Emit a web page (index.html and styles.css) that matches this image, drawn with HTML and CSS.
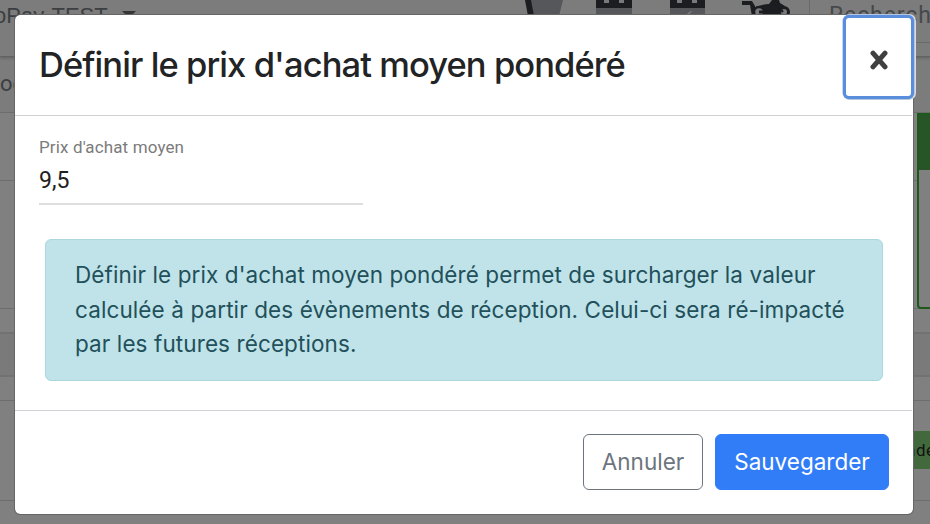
FILE: index.html
```html
<!DOCTYPE html>
<html lang="fr">
<head>
<meta charset="utf-8">
<title>Prix d'achat moyen pondéré</title>
<link rel="stylesheet" href="styles.css">
</head>
<body>
<div class="page">
  <header class="topbar">
    <div class="account"><span>oPay-TEST</span><i class="caret"></i></div>
    <svg class="topicons" width="280" height="16" viewBox="0 0 280 16">
      <path fill="#55575a" d="M0 0H38L34 16H7Z"/><path fill="#1b1d21" d="M0 0H6L9 16H3Z"/>
      <path fill="#55575a" d="M71 7h36v9H71zM145 7h35v9h-35z"/>
      <path fill="#1b1d21" d="M71 0h36v8H71zM145 0h35v8h-35z"/>
      <path fill="#77797b" d="M79 0h5v3h-5zM94 0h5v3h-5zM152 0h5v3h-5zM167 0h5v3h-5zM161 16q2-5 7-5q-4 2-3 5zM92 14h2v2h-2z"/>
      <path fill="#1b1d21" d="M217 1h10l3 5 2 10h-5l-2-11h-8zM231 7q8-3 13-3l3-4h7l1 3 5 3-4 2-3 7h-13q0-6-6-7z"/>
      <circle cx="234" cy="12" r="5" fill="#77797b" stroke="#1b1d21" stroke-width="2.5"/>
      <path d="M234 12h9" stroke="#1b1d21" stroke-width="3"/>
      <circle cx="259" cy="12" r="4.5" fill="#77797b" stroke="#1b1d21" stroke-width="3"/>
      <path d="M249 1l9 11" stroke="#1b1d21" stroke-width="2"/>
    </svg>
    <div class="search">Recherche</div>
  </header>
  <div class="content">
    <div class="rows">
      <div class="row crumbs">oduits</div>
      <div class="row r2"></div>
      <div class="row r3"></div>
      <div class="row r4"></div>
      <div class="row r5"></div>
      <div class="row r6"></div>
      <div class="row r7"></div>
      <div class="row r8"></div>
    </div>
    <aside class="side">
      <div class="card"><div class="card-head"></div></div>
      <div class="tag">Pondéré</div>
    </aside>
  </div>
</div>
<section class="modal" role="dialog">
  <header class="modal-head">
    <h1>Définir le prix d'achat moyen pondéré</h1>
    <button class="close" aria-label="Fermer"><svg width="20" height="20" viewBox="0 0 20 20"><path d="M4 3.2L16 16.8M16 3.2L4 16.8" stroke="#404040" stroke-width="5" stroke-linecap="round"/></svg></button>
  </header>
  <div class="modal-body">
    <div class="field"><label>Prix d'achat moyen</label><div class="value">9,5</div></div>
    <div class="alert">Définir le prix d'achat moyen pondéré permet de surcharger la valeur<br>calculée à partir des évènements de réception. Celui-ci sera ré-impacté<br>par les futures réceptions.</div>
  </div>
  <footer class="modal-foot">
    <button class="btn cancel">Annuler</button>
    <button class="btn save">Sauvegarder</button>
  </footer>
</section>
</body>
</html>
```
FILE: styles.css
```css
* { box-sizing: border-box; }
body { margin: 0; width: 930px; height: 524px; overflow: hidden; position: relative; background: #808080; font-family: Inter, sans-serif; }
.page { height: 524px; display: flex; flex-direction: column; color: #3c3f42; overflow: hidden; }
.topbar { height: 57px; flex: none; display: flex; align-items: flex-start; background: #7c7c7c; border-bottom: 1px solid #626262; box-shadow: 0 1px 3px #606060; position: relative; }
.account { width: 526px; flex: none; height: 32px; display: flex; font: 22px/32px "Liberation Sans", sans-serif; margin-left: -6px; }
.caret { width: 0; height: 0; border: 7px solid transparent; border-top-color: #353535; margin: 11px 0 0 14px; }
.topicons { margin-left: 5px; flex: none; }
.search { margin-left: 4px; width: 130px; height: 43px; flex: none; border-left: 1px solid #6a6a6a; border-bottom: 1px solid #6a6a6a; padding-left: 19px; font: 23px/32px Roboto, sans-serif; letter-spacing: .9px; color: #46494c; }
.content { flex: 1; display: flex; }
.rows { width: 930px; flex: none; }
.row { border-bottom: 1px solid #6d6d6d; }
.crumbs { height: 56px; font: 400 22px/54px Roboto, sans-serif; background: #7c7c7c; white-space: nowrap; }
.r2 { height: 68px; }
.r3 { height: 128px; }
.r4 { height: 25px; border-bottom: 2px solid #727272; }
.r5 { height: 43px; background: #7a7a7a; border-bottom: 2px solid #727272; }
.r6 { height: 24px; }
.r7 { height: 100px; }
.r8 { height: 23px; border: 0; }
.side { width: 180px; flex: none; margin-left: -13px; padding-top: 56px; }
.card { height: 196px; background: #808080; border: 2px solid #1c5a1c; border-radius: 0 0 0 4px; }
.card-head { height: 55px; background: #285528; }
.tag { height: 38px; margin: 122px 0 0 -15px; background: #42693c; color: #111; font: 400 17px/39px Roboto, sans-serif; letter-spacing: .4px; text-indent: -17px; }
.modal { position: absolute; left: 14px; top: 14px; width: 900px; height: 501px; background: #fff; background-clip: padding-box; border: 1px solid #666; border-radius: 6px; display: flex; flex-direction: column; }
.modal-head { height: 101px; flex: none; border-bottom: 1px solid #cfd0d2; display: flex; justify-content: space-between; padding-left: 24px; margin-right: 1px; }
h1 { margin: 0; font-size: 34.5px; line-height: 100px; font-weight: 500; color: #212325; white-space: nowrap; letter-spacing: -.92px; }
.close { width: 71px; height: 84px; margin: 0 -2px 0 0; padding: 6px 0 0; border: 3px solid #5a8ddc; border-radius: 6px; background: #fff; box-shadow: 0 0 0 .5px #8aafe8, 1px 0 0 1px #dcdcdc; display: flex; align-items: center; justify-content: center; }
.modal-body { height: 295px; flex: none; border-bottom: 1px solid #cfd0d6; margin-right: 1px; }
.field { width: 324px; height: 89px; margin-left: 24px; padding-top: 19px; border-bottom: 2px solid #dedede; font-family: Roboto, sans-serif; }
label { display: block; font-size: 17px; line-height: 24px; color: #7b7b7b; letter-spacing: .13px; }
.value { font-size: 23px; line-height: 43px; color: #202020; }
.alert { width: 838px; height: 142px; margin: 34px 0 0 30px; padding: 18px 29px; background: #bfe3e8; border: 1px solid #abd7df; border-radius: 6px; color: #22505b; font-size: 22.5px; line-height: 34.5px; letter-spacing: .1px; white-space: nowrap; }
.modal-foot { flex: 1; display: flex; justify-content: flex-end; padding: 23px 24px 0; gap: 12px; }
.btn { height: 56px; border-radius: 6px; padding: 0; font: 22.5px/54px Inter, sans-serif; white-space: nowrap; }
.cancel { width: 120px; border: 1px solid #6c757d; background: #fff; color: #6c757d; }
.save { width: 174px; border: 1px solid #317df7; background: #317df7; color: #fff; }
```
